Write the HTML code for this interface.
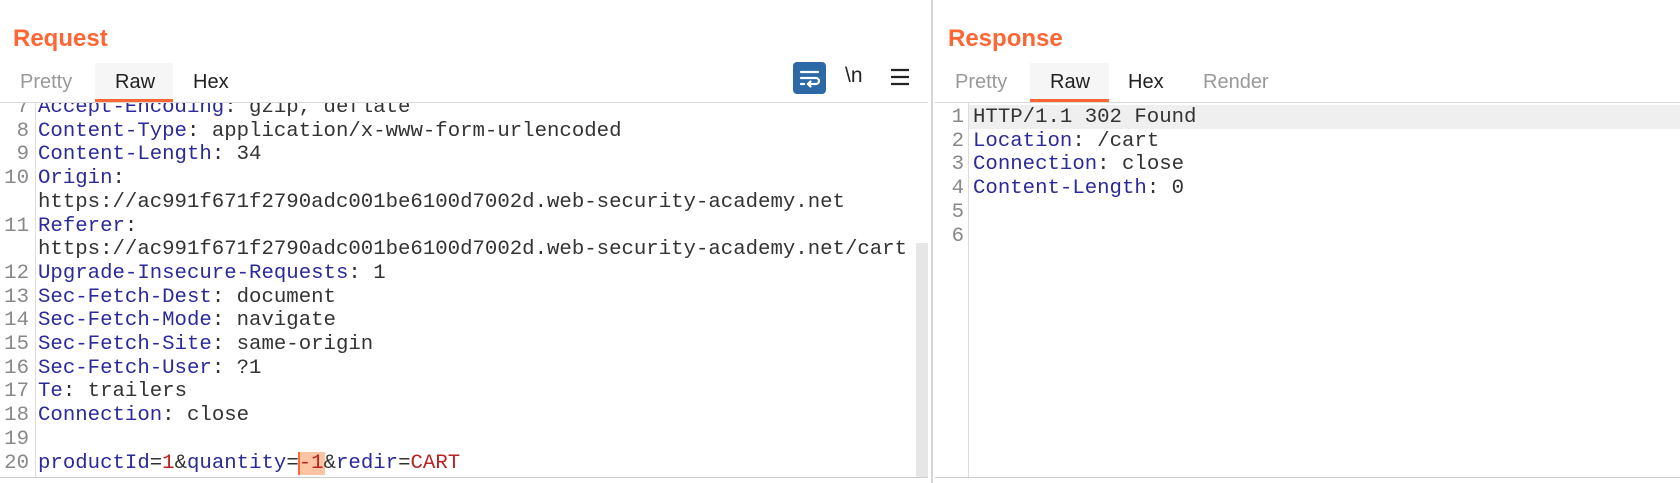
<!DOCTYPE html>
<html><head><meta charset="utf-8"><style>
*{margin:0;padding:0;box-sizing:border-box}
body{width:1680px;height:483px;background:#fff;position:relative;overflow:hidden;font-family:"Liberation Sans",sans-serif}
.abs{position:absolute}
.h{position:absolute;top:25px;font-weight:bold;font-size:24px;color:#ff6633}
.tab{position:absolute;top:71px;font-size:20px;color:#222}
.tab.g{color:#999}
.code{position:absolute;font-family:"Liberation Mono",monospace;font-size:20.7px;line-height:23.7px;white-space:pre;color:#333}
.k{color:#2a2a9a}
.r{color:#b22}
.num{position:absolute;font-family:"Liberation Mono",monospace;font-size:20.7px;line-height:23.7px;white-space:pre;color:#888;text-align:right}
</style></head><body>
<!-- Left panel -->
<div class="h" style="left:13px">Request</div>
<div class="abs" style="left:95px;top:63px;width:78px;height:39px;background:#f6f6f6"></div>
<div class="abs" style="left:95px;top:99px;width:78px;height:3px;background:#ff6633"></div>
<div class="tab g" style="left:20px">Pretty</div>
<div class="tab" style="left:115px">Raw</div>
<div class="tab" style="left:193px">Hex</div>
<div class="abs" style="left:0;top:102px;width:928px;height:1px;background:#d8d8d8"></div>
<div class="abs" style="left:793px;top:62px;width:33px;height:32px;background:#2d69a6;border-radius:4px"></div>
<svg class="abs" style="left:793px;top:62px" width="33" height="32" viewBox="0 0 33 32"><g stroke="#fff" stroke-width="2.2" fill="none" stroke-linecap="round"><path d="M8 10H25"/><path d="M8 16H23a3 3 0 0 1 0 6H15"/><path d="M17.5 19.5L15 22l2.5 2.5"/><path d="M8 22H11"/></g></svg>
<div class="abs" style="left:845px;top:64px;font-size:21px;color:#222">\n</div>
<svg class="abs" style="left:890px;top:68px" width="20" height="18"><g stroke="#222" stroke-width="2.2"><path d="M1 2H19M1 9H19M1 16H19"/></g></svg>
<div class="abs" style="left:0;top:103px;width:916px;height:374px;overflow:hidden">
<div class="num" style="left:0;top:-7px;width:29px">7
8
9
10

11

12
13
14
15
16
17
18
19
20</div>
<div class="abs" style="left:35px;top:0;width:1px;height:374px;background:#ddd"></div>
<div class="abs" style="left:298px;top:348.5px;width:27px;height:23.7px;background:#fbc4a3"></div>
<div class="abs" style="left:298px;top:348.5px;width:2px;height:23.7px;background:#ff6633"></div>
<div class="code" style="left:38px;top:-7px"><span class="k">Accept-Encoding</span>: gzip, deflate
<span class="k">Content-Type</span>: application/x-www-form-urlencoded
<span class="k">Content-Length</span>: 34
<span class="k">Origin</span>:
https://ac991f671f2790adc001be6100d7002d.web-security-academy.net
<span class="k">Referer</span>:
https://ac991f671f2790adc001be6100d7002d.web-security-academy.net/cart
<span class="k">Upgrade-Insecure-Requests</span>: 1
<span class="k">Sec-Fetch-Dest</span>: document
<span class="k">Sec-Fetch-Mode</span>: navigate
<span class="k">Sec-Fetch-Site</span>: same-origin
<span class="k">Sec-Fetch-User</span>: ?1
<span class="k">Te</span>: trailers
<span class="k">Connection</span>: close

<span class="k">productId</span>=<span class="r">1</span>&amp;<span class="k">quantity</span>=<span class="r">-1</span>&amp;<span class="k">redir</span>=<span class="r">CART</span></div>
</div>
<div class="abs" style="left:916px;top:243px;width:12px;height:234px;background:#e6e6e6"></div>
<div class="abs" style="left:0;top:477px;width:928px;height:1px;background:#ccc"></div>
<!-- Divider -->
<div class="abs" style="left:931px;top:0;width:2px;height:483px;background:#d4d4d4"></div>
<!-- Right panel -->
<div class="h" style="left:948px">Response</div>
<div class="abs" style="left:1030px;top:63px;width:79px;height:39px;background:#f6f6f6"></div>
<div class="abs" style="left:1030px;top:99px;width:79px;height:3px;background:#ff6633"></div>
<div class="tab g" style="left:955px">Pretty</div>
<div class="tab" style="left:1050px">Raw</div>
<div class="tab" style="left:1128px">Hex</div>
<div class="tab g" style="left:1203px">Render</div>
<div class="abs" style="left:935px;top:102px;width:745px;height:1px;background:#d8d8d8"></div>
<div class="abs" style="left:969px;top:105px;width:711px;height:23.7px;background:#efefef"></div>
<div class="abs" style="left:968px;top:103px;width:1px;height:374px;background:#ddd"></div>
<div class="num" style="left:935px;top:106px;width:29px">1
2
3
4
5
6</div>
<div class="code" style="left:973px;top:106px">HTTP/1.1 302 Found
<span class="k">Location</span>: /cart
<span class="k">Connection</span>: close
<span class="k">Content-Length</span>: 0</div>
<div class="abs" style="left:935px;top:477px;width:745px;height:1px;background:#ccc"></div>
</body></html>
